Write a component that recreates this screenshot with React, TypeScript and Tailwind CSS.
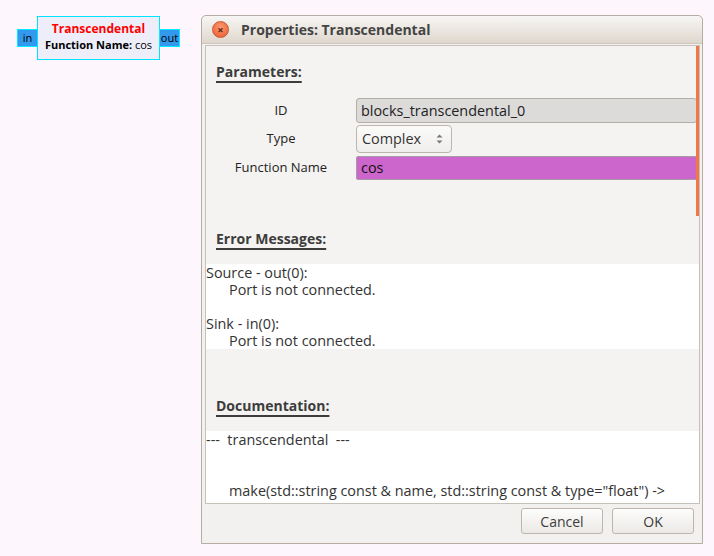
import React from "react";

const font = { fontFamily: '"Open Sans", "Noto Sans", sans-serif' };

function Heading({ children }: { children: React.ReactNode }) {
  return (
    <div className="pl-[10px] h-[18px] leading-[18px] text-[14px] font-bold text-[#3c3c3c] underline decoration-2 underline-offset-[4px]">
      {children}
    </div>
  );
}

export default function App() {
  return (
    <div
      className="relative w-[714px] h-[556px] bg-[#fdf6fd] overflow-hidden"
      style={font}
    >
      {/* Flowgraph block */}
      <div className="absolute left-[17px] top-[29px] w-[21px] h-[18px] bg-[#3399ee] border border-[#00eeff] text-[11px] leading-[16px] text-center text-black">
        in
      </div>
      <div className="absolute left-[37px] top-[16px] w-[123px] h-[44px] bg-[#eeeefa] border border-[#00e5ff] flex flex-col items-center justify-center">
        <div className="text-[12px] leading-[16px] font-bold text-[#ff0000] -mt-[2px]">Transcendental</div>
        <div className="text-[11px] leading-[16px] text-black">
          <span className="font-bold">Function Name:</span> cos
        </div>
      </div>
      <div className="absolute left-[159px] top-[29px] w-[21px] h-[18px] bg-[#3399ee] border border-[#00eeff] text-[11px] leading-[16px] text-center text-black">
        out
      </div>

      {/* Dialog window */}
      <div className="absolute left-[201px] top-[15px] w-[502px] h-[529px] border border-[#b5aca3] rounded-t-[5px] bg-[#f2f1f0] flex flex-col">
        {/* title bar */}
        <div className="h-[28px] shrink-0 rounded-t-[5px] bg-gradient-to-b from-[#f7f6f4] to-[#dfd7cd] border-b border-[#cfc7bd] flex items-center">
          <div className="ml-[10px] w-[17px] h-[17px] rounded-full bg-[radial-gradient(circle_at_50%_35%,#fa9a72,#ea5a2c)] border border-[#c9582f] flex items-center justify-center text-[#5a2414] text-[11px] leading-none font-bold">
            ×
          </div>
          <div className="ml-[12px] text-[14px] font-bold text-[#444]">Properties: Transcendental</div>
        </div>
        {/* body frame */}
        <div className="mt-[1px] ml-[3px] mr-[2px] h-[459px] border border-[#c6c1bb] bg-[#f4f3f1] relative overflow-hidden flex flex-col">
          <div className="absolute right-0 top-0 w-[3px] h-[170px] bg-[#f07746]" />
          <div className="mt-[17px]">
            <Heading>Parameters:</Heading>
          </div>
          <div className="mt-[17px] flex flex-col text-[13px] text-[#222]">
            <div className="flex items-center h-[25px]">
              <div className="w-[150px] text-center">ID</div>
              <div className="flex-1 h-[25px] mr-[2px] rounded-[3px] border border-[#b3aea8] bg-[#dcdbda] px-[4px] flex items-center text-[14.4px] text-[#222]">
                blocks_transcendental_0
              </div>
            </div>
            <div className="flex items-center h-[28px] mt-[2px]">
              <div className="w-[150px] text-center">Type</div>
              <div className="w-[96px] h-[28px] rounded-[4px] border border-[#bcb6ae] bg-gradient-to-b from-[#fbfbfa] to-[#efeeec] pl-[5px] pr-[8px] flex items-center justify-between text-[14.4px] text-[#333]">
                <span>Complex</span>
                <svg width="7" height="12" viewBox="0 0 7 12">
                  <path d="M0.5 4.5 L3.5 1.5 L6.5 4.5 Z" fill="#777" />
                  <path d="M0.5 7.5 L3.5 10.5 L6.5 7.5 Z" fill="#777" />
                </svg>
              </div>
            </div>
            <div className="flex items-center h-[24px] mt-[3px]">
              <div className="w-[150px] text-center">Function Name</div>
              <div className="flex-1 h-[24px] mr-[2px] rounded-[2px] border border-[#a99aa8] bg-[#cc66cc] px-[4px] flex items-center text-[14.4px] text-[#111]">
                cos
              </div>
            </div>
          </div>

          <div className="mt-[50px]">
            <Heading>Error Messages:</Heading>
          </div>
          <div className="mt-[16px] h-[85px] shrink-0 bg-white text-[14.4px] leading-[17px] text-[#333]">
            <div>Source - out(0):</div>
            <div className="pl-[23px]">Port is not connected.</div>
            <div>&nbsp;</div>
            <div>Sink - in(0):</div>
            <div className="pl-[23px]">Port is not connected.</div>
          </div>

          <div className="mt-[48px]">
            <Heading>Documentation:</Heading>
          </div>
          <div className="mt-[16px] flex-1 bg-white text-[14.4px] leading-[17px] text-[#333] overflow-hidden whitespace-pre">
            <div>{"---  transcendental  ---"}</div>
            <div>&nbsp;</div>
            <div>&nbsp;</div>
            <div className="pl-[23px]">{'make(std::string const & name, std::string const & type="float") ->'}</div>
          </div>
        </div>
        {/* buttons */}
        <div className="flex justify-end gap-[9px] mt-[4px] mr-[8px]">
          <button className="w-[82px] h-[26px] rounded-[3px] border border-[#bdb6ad] bg-gradient-to-b from-[#fdfdfc] to-[#ebe9e6] text-[14px] text-[#3c3c3c]">
            Cancel
          </button>
          <button className="w-[82px] h-[26px] rounded-[3px] border border-[#bdb6ad] bg-gradient-to-b from-[#fdfdfc] to-[#ebe9e6] text-[14px] text-[#3c3c3c]">
            OK
          </button>
        </div>
      </div>
    </div>
  );
}
